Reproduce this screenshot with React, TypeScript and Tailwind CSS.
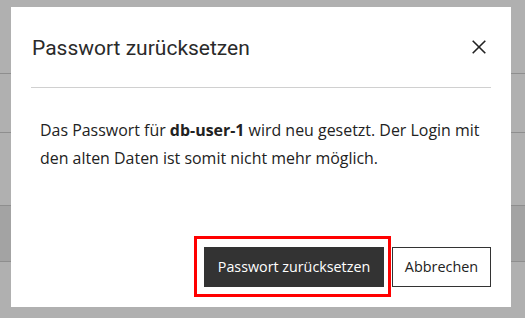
export default function App() {
    return (
        <div
            className="relative w-[525px] h-[318px] overflow-hidden bg-[#b0b0b0]"
            style={{ fontFamily: "'Open Sans', 'Liberation Sans', sans-serif" }}
        >
            {/* table rows behind the overlay */}
            <div className="flex flex-col">
                <div className="h-[74px] border-b border-[#8e8e8e]" />
                <div className="h-[59px] border-b border-[#8e8e8e]" />
                <div className="h-[73px] border-b border-[#8e8e8e]" />
                <div className="h-[56px] bg-[#a3a3a3] border-b border-[#8e8e8e]" />
            </div>

            {/* modal */}
            <div className="absolute left-[11px] top-[7px] w-[500px] h-[300px] bg-white flex flex-col">
                <div className="mx-5 h-[81px] flex items-center justify-between border-b border-[#d0d0d0]">
                    <h2 className="pl-px pt-[2px] text-[21px] text-[#2a2a2a] leading-none font-[Roboto,sans-serif]">
                        Passwort zurücksetzen
                    </h2>
                    <button className="mr-[5px] mb-[1px] text-[#222]">
                        <svg width="14" height="14" viewBox="0 0 14 14" fill="none" stroke="currentColor" strokeWidth="1.6">
                            <path d="M0.7 0.7 L13.3 13.3 M13.3 0.7 L0.7 13.3" />
                        </svg>
                    </button>
                </div>
                <div className="px-[29px] pt-[28px] text-[15.95px] leading-[28px] text-[#222]">
                    Das Passwort für <b>db-user-1</b> wird neu gesetzt. Der Login mit den alten Daten ist somit nicht mehr möglich.
                </div>
                <div className="mt-auto px-5 pb-5 flex justify-end gap-2">
                    <div className="relative">
                        <button className="h-10 w-[180px] bg-[#333] text-white text-[14.3px]">
                            Passwort zurücksetzen
                        </button>
                        <div className="absolute -left-[10px] -top-[11px] -right-[7px] -bottom-[10px] border-[3px] border-[#ff0000] pointer-events-none" />
                    </div>
                    <button className="h-10 w-[99px] bg-white border border-[#333] text-[#222] text-[14.4px]">
                        Abbrechen
                    </button>
                </div>
            </div>
        </div>
    );
}
